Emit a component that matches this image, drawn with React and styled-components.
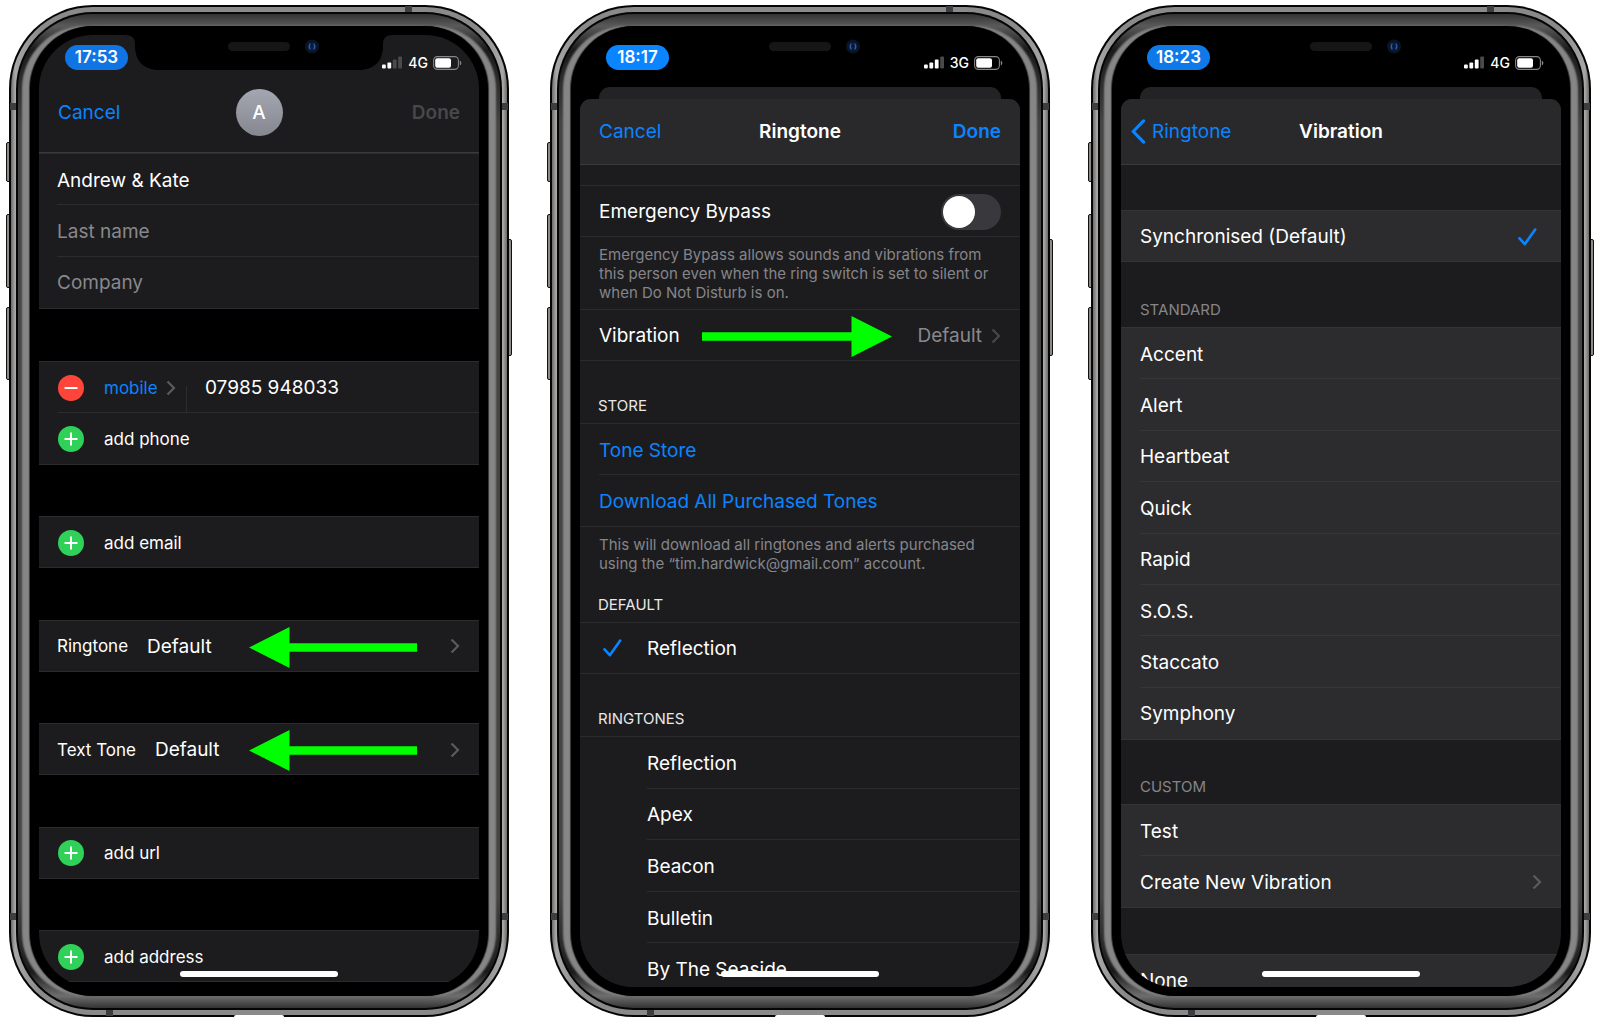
import React, { useState } from 'react';
import styled, { createGlobalStyle } from 'styled-components';

const GlobalStyle = createGlobalStyle`
  * {
    box-sizing: border-box;
  }

  body {
    margin: 0;
    background: #fff;
    font-family: Inter, 'Liberation Sans', sans-serif;
    font-size: 19px;
    color: #fff;
  }

  button,
  input {
    padding: 0;
    border: none;
    background: none;
    font: inherit;
    color: inherit;
    text-align: left;
  }
`;

const Page = styled.main`
  display: grid;
  grid-template-columns: repeat(3, minmax(0, 1fr));
  gap: 41px;
  padding: 5px 9px;
`;

/* ---------- device ---------- */

const Phone = styled.section`
  position: relative;
  height: calc(100vh - 10px);
  min-height: 900px;
  padding: 2px;
  border-radius: 84px;
  background: #050505;
`;

const Band = styled.div`
  height: 100%;
  padding: 5px;
  border-radius: 82px;
  background: linear-gradient(
    to right,
    #6c6a69,
    #a9a7a6 4px,
    #8a8a8a 30px,
    #8a8a8a calc(100% - 30px),
    #a9a7a6 calc(100% - 4px),
    #6c6a69
  );
`;

const Rim = styled.div`
  height: 100%;
  padding: 2px;
  border-radius: 77px;
  background: #050505;
`;

const Bezel = styled.div`
  height: 100%;
  padding: 12px;
  overflow: hidden;
  border-radius: 75px;
  background: linear-gradient(
    #333,
    #5a5a5a 12px,
    #1a1a1a 36px,
    #444 110px,
    #444 calc(100% - 110px),
    #1a1a1a calc(100% - 36px),
    #6e6e6e calc(100% - 12px),
    #333
  );
`;

const Glass = styled.div`
  height: 100%;
  padding: 9px;
  border-radius: 63px;
  background: #000;
  box-shadow:
    -1px 0 1px #333,
    1px 0 1px #333,
    -8px 0 2px #868686,
    8px 0 2px #868686;
`;

const Screen = styled.div`
  position: relative;
  display: flex;
  flex-direction: column;
  height: 100%;
  overflow: hidden;
  border-radius: 54px;
  background: #000;
`;

const SideKey = styled.i`
  position: absolute;
  z-index: -1;
  ${({ $side }) => $side}: -3px;
  top: ${({ $top }) => $top}px;
  width: 6px;
  height: ${({ $length }) => $length}px;
  border: 1px solid #111;
  border-radius: 2px;
  background: #8d8b8a;
`;

const AntennaLine = styled.i`
  position: absolute;
  width: ${({ $flat }) => ($flat ? 7 : 6)}px;
  height: ${({ $flat }) => ($flat ? 6 : 7)}px;
  background: #3d3d42;
`;

const PortGlint = styled.i`
  position: absolute;
  bottom: 0;
  left: 50%;
  width: 50px;
  height: 2px;
  margin-left: -25px;
  border-radius: 2px 2px 0 0;
  background: #fff;
`;

const Notch = styled.svg`
  position: absolute;
  top: 0;
  left: 50%;
  width: 268px;
  height: 36px;
  margin-left: -134px;
`;

const HomeBar = styled.i`
  position: absolute;
  bottom: 10px;
  left: 50%;
  width: 158px;
  height: 6px;
  margin-left: -79px;
  border-radius: 3px;
  background: #fff;
`;

/* ---------- status bar ---------- */

const StatusBar = styled.header`
  display: flex;
  flex: none;
  align-items: flex-end;
  justify-content: space-between;
  height: 35px;
  padding: 0 17px 0 26px;
  background: ${({ $bg }) => $bg || 'transparent'};
`;

const Clock = styled.time`
  width: 63px;
  border-radius: 13px;
  background: ${({ $color }) => $color};
  font-size: 17px;
  font-weight: 600;
  line-height: 25px;
  text-align: center;
`;

const Signals = styled.div`
  display: flex;
  align-items: center;
  gap: 5px;
  font-size: 14px;
  font-weight: 500;
  line-height: 15px;
`;

/* ---------- navigation bars ---------- */

const NavBar = styled.nav`
  display: grid;
  flex: none;
  grid-template-columns: 1fr auto 1fr;
  align-items: center;
  height: ${({ $tall }) => ($tall ? 83 : 66)}px;
  padding: ${({ $tall }) => ($tall ? 3 : 0)}px 19px 0;
  border-bottom: 1px solid #3a3a3c;
  background: ${({ $tall }) => ($tall ? '#1c1c1e' : '#29292b')};
`;

const NavButton = styled.button`
  display: flex;
  align-items: center;
  gap: 6px;
  justify-self: ${({ $end }) => ($end ? 'end' : 'start')};
  margin-left: ${({ $back }) => ($back ? -9 : 0)}px;
  color: #0a84ff;
  font-weight: ${({ $end }) => ($end ? 600 : 400)};

  &:disabled {
    color: #48484b;
  }
`;

const NavTitle = styled.h1`
  margin: 0;
  font-size: 19px;
  font-weight: 600;
`;

const Avatar = styled.span`
  width: 47px;
  border-radius: 50%;
  background: linear-gradient(#a4a6b1, #858790);
  font-weight: 500;
  line-height: 47px;
  text-align: center;
`;

const BackCard = styled.div`
  flex: none;
  height: 12px;
  margin: 17px 19px 0;
  border-radius: 11px 11px 0 0;
  background: #232325;
`;

const Sheet = styled.div`
  display: flex;
  flex: 1;
  flex-direction: column;
  min-height: 0;
  overflow: hidden;
  border-radius: 11px 11px 0 0;
  background: #1c1c1e;
`;

/* ---------- lists ---------- */

const CardBody = styled.div`
  display: flex;
  flex: 1;
  flex-direction: column;
  justify-content: space-between;
  margin-bottom: 5px;
`;

const Group = styled.div`
  display: flex;
  flex: none;
  flex-direction: column;
  min-height: ${({ $height }) => $height}px;
  border: solid ${({ $line }) => $line || '#2c2c2e'};
  border-width: 1px 0;
  background: ${({ $bg }) => $bg || '#1c1c1e'};
`;

const Row = styled.div`
  position: relative;
  display: flex;
  flex: 1;
  align-items: stretch;
  padding-left: ${({ $inset }) => $inset || 19}px;
`;

const RowBody = styled.div`
  display: flex;
  flex: 1;
  align-items: center;
  min-width: 0;
  padding: 2px 19px 0 0;
  border-bottom: 1px solid ${({ $line }) => $line || '#2c2c2e'};

  ${Row}:last-child > & {
    border-bottom-color: transparent;
  }
`;

const RowButton = styled.button`
  flex: 1;
  align-self: stretch;
  color: ${({ $accent }) => ($accent ? '#0a84ff' : '#fff')};
`;

const RowLabel = styled.label`
  flex: 1;
`;

const BadgeButton = styled.button`
  display: flex;
  flex: none;
  width: 46px;
`;

const TickColumn = styled.span`
  display: flex;
  flex: none;
  align-items: center;
  width: 48px;
  padding-left: 4px;
`;

const TickEnd = styled.span`
  display: flex;
  padding-right: 5px;
`;

const Field = styled.input`
  flex: 1;
  min-width: 0;
  outline: none;

  &::placeholder {
    color: #88888d;
    opacity: 1;
  }
`;

const EntryButton = styled.button`
  display: flex;
  flex: 1;
  align-items: center;
  align-self: stretch;
  gap: 19px;
  font-size: 17px;
`;

const EntryLead = styled.span`
  display: flex;
  flex: none;
  width: 27px;
`;

const PhoneKind = styled.button`
  display: flex;
  align-items: center;
  gap: 8px;
  width: 82px;
  color: #0a84ff;
  font-size: 17px;
`;

const KindDivider = styled.i`
  align-self: flex-end;
  width: 1px;
  height: 26px;
  margin-right: 18px;
  background: #2c2c2e;
`;

const Value = styled.span`
  flex: 1;
  font-size: 19px;
`;

const Muted = styled.span`
  margin-right: 9px;
  color: #88888d;
`;

const GroupTitle = styled.h2`
  display: flex;
  flex: none;
  align-items: flex-end;
  height: ${({ $height }) => $height}px;
  margin: 0;
  padding: 0 ${({ $muted }) => ($muted ? 19 : 18)}px 8px;
  color: ${({ $muted }) => ($muted ? '#85858a' : '#e8e8ea')};
  font-size: 15px;
  font-weight: 400;
  line-height: 18px;
`;

const Note = styled.p`
  flex: none;
  margin: 0;
  padding: 8px 19px 7px;
  color: #85858a;
  font-size: 15px;
  line-height: 19px;
  white-space: nowrap;
`;

const Spacer = styled.div`
  flex: none;
  height: ${({ $height }) => $height}px;
`;

const Switch = styled.input`
  width: 60px;
  height: 36px;
  margin: 0;
  border-radius: 18px;
  background: ${({ checked }) => (checked ? '#30d158' : '#39393d')};
  appearance: none;

  &::before {
    display: block;
    width: 32px;
    height: 32px;
    margin: 2px;
    border-radius: 50%;
    background: #fff;
    content: '';
    transform: translateX(${({ checked }) => (checked ? 24 : 0)}px);
  }
`;

const ArrowSvg = styled.svg`
  position: absolute;
  top: 6px;
  right: ${({ $right }) => $right}px;
`;

/* ---------- icons ---------- */

const SignalIcon = ({ bars }) => (
  <svg width="21" height="13" viewBox="0 0 21 13" aria-hidden="true">
    {[4, 6, 9, 12].map((h, i) => (
      <rect key={h} x={i * 5.4} y={12.5 - h} width="3.8" height={h} rx="1" fill={i < bars ? '#fff' : '#4a4a4c'} />
    ))}
  </svg>
);

const BatteryIcon = () => (
  <svg width="29" height="14" viewBox="0 0 29 14" aria-hidden="true">
    <rect x="0.6" y="0.6" width="24.8" height="12.8" rx="3.8" fill="none" stroke="#87878a" strokeWidth="1.1" />
    <rect x="2.2" y="2.2" width="15.8" height="9.6" rx="2" fill="#fff" />
    <path d="M26.8 4.8c1 .3 1.5 1.1 1.5 2.2s-.5 1.9-1.5 2.2z" fill="#87878a" />
  </svg>
);

const Chevron = ({ color = '#5b5b5f' }) => (
  <svg width="10" height="16" viewBox="0 0 10 16" fill="none" aria-hidden="true">
    <path d="M1.5 1.5 8 8l-6.5 6.5" stroke={color} strokeWidth="2.2" />
  </svg>
);

const BackIcon = () => (
  <svg width="15" height="25" viewBox="0 0 15 25" fill="none" aria-hidden="true">
    <path d="M12.6 1.9 2.2 12.5l10.4 10.6" stroke="#0a84ff" strokeWidth="3.2" strokeLinecap="round" strokeLinejoin="round" />
  </svg>
);

const CheckIcon = () => (
  <svg width="19" height="18" viewBox="0 0 19 18" fill="none" aria-hidden="true">
    <path d="M1.5 10.3 6.8 16.2 17.2 1.5" stroke="#0a84ff" strokeWidth="2.6" strokeLinecap="round" strokeLinejoin="round" />
  </svg>
);

const BadgeIcon = ({ remove }) => (
  <svg width="26" height="26" viewBox="0 0 26 26" aria-hidden="true">
    <circle cx="13" cy="13" r="13" fill={remove ? '#ff453a' : '#30d158'} />
    <path d={remove ? 'M6.5 13h13' : 'M6.5 13h13M13 6.5v13'} stroke="#fff" strokeWidth="2" />
  </svg>
);

const ArrowLeft = () => (
  <ArrowSvg $right={62} width="168" height="41" viewBox="0 0 168 41" aria-hidden="true">
    <path d="M0 20.5 40.5 0v16.2H168v8.6H40.5V41z" fill="#0f0" />
  </ArrowSvg>
);

const ArrowRight = () => (
  <ArrowSvg $right={128} width="190" height="41" viewBox="0 0 190 41" aria-hidden="true">
    <path d="M190 20.5 149.5 0v16.2H0v8.6h149.5V41z" fill="#0f0" />
  </ArrowSvg>
);

/* ---------- shared pieces ---------- */

const Device = ({ label, time, timeColor, bars, network, barBg, children }) => (
  <Phone aria-label={label}>
    <SideKey $side="left" $top={137} $length={40} />
    <SideKey $side="left" $top={209} $length={74} />
    <SideKey $side="left" $top={302} $length={73} />
    <SideKey $side="right" $top={234} $length={117} />
    <Band>
      <Rim>
        <Bezel>
          <Glass>
            <Screen>
              <StatusBar $bg={barBg}>
                <Clock $color={timeColor}>{time}</Clock>
                <Signals>
                  <SignalIcon bars={bars} />
                  {network}
                  <BatteryIcon />
                </Signals>
              </StatusBar>
              {children}
              <Notch viewBox="0 0 268 36" aria-hidden="true">
                <path d="M0 0h268c-7 0-10 3-10 9v2c0 15-9 24-24 24H34C19 35 10 26 10 11V9c0-6-3-9-10-9z" fill="#000" />
                <rect x="103" y="7" width="62" height="9" rx="4.5" fill="#161616" />
                <circle cx="187" cy="11.5" r="7" fill="#0b1424" />
                <circle cx="187" cy="11.5" r="4.5" fill="#0a1a3c" />
                <path d="M185.2 8.5q-2 3 0 6M188.8 8.5q2 3 0 6" fill="none" stroke="#2f5da6" strokeWidth="1.2" />
              </Notch>
              <HomeBar />
            </Screen>
          </Glass>
        </Bezel>
      </Rim>
    </Band>
    <AntennaLine style={{ top: 98, left: 1 }} />
    <AntennaLine style={{ top: 98, right: 1 }} />
    <AntennaLine style={{ bottom: 97, left: 1 }} />
    <AntennaLine style={{ bottom: 97, right: 1 }} />
    <AntennaLine $flat style={{ top: 1, right: 97 }} />
    <AntennaLine $flat style={{ bottom: 1, left: 97 }} />
    <PortGlint />
  </Phone>
);

const AddRow = ({ children }) => (
  <Row>
    <RowBody>
      <EntryButton>
        <EntryLead>
          <BadgeIcon />
        </EntryLead>
        {children}
      </EntryButton>
    </RowBody>
  </Row>
);

const FieldRow = ({ label, value }) => (
  <Row $inset={18}>
    <RowBody>
      <Field aria-label={label} placeholder={label} defaultValue={value} />
    </RowBody>
  </Row>
);

const ToneEntry = ({ label, value }) => (
  <Row $inset={18}>
    <RowBody>
      <EntryButton>
        {label}
        <Value>{value}</Value>
        <Chevron />
      </EntryButton>
    </RowBody>
    <ArrowLeft />
  </Row>
);

/* ---------- screens ---------- */

const ContactScreen = () => (
  <Device label="Edit contact" time="17:53" timeColor="#1174e4" bars={2} network="4G" barBg="#1c1c1e">
    <NavBar $tall>
      <NavButton>Cancel</NavButton>
      <Avatar>A</Avatar>
      <NavButton $end disabled>Done</NavButton>
    </NavBar>
    <CardBody>
      <Group $height={156}>
        <FieldRow label="First name" value="Andrew &amp; Kate" />
        <FieldRow label="Last name" />
        <FieldRow label="Company" />
      </Group>
      <Group $height={104}>
        <Row>
          <RowBody>
            <BadgeButton aria-label="Remove number">
              <BadgeIcon remove />
            </BadgeButton>
            <PhoneKind>
              mobile
              <Chevron />
            </PhoneKind>
            <KindDivider />
            <Field type="tel" aria-label="Mobile number" defaultValue="07985 948033" />
          </RowBody>
        </Row>
        <AddRow>add phone</AddRow>
      </Group>
      <Group $height={52}>
        <AddRow>add email</AddRow>
      </Group>
      <Group $height={52}>
        <ToneEntry label="Ringtone" value="Default" />
      </Group>
      <Group $height={52}>
        <ToneEntry label="Text Tone" value="Default" />
      </Group>
      <Group $height={52}>
        <AddRow>add url</AddRow>
      </Group>
      <Group $height={52}>
        <AddRow>add address</AddRow>
      </Group>
    </CardBody>
  </Device>
);

const tones = ['Reflection', 'Apex', 'Beacon', 'Bulletin', 'By The Seaside'];

const RingtoneScreen = () => {
  const [bypass, setBypass] = useState(false);

  return (
    <Device label="Ringtone" time="18:17" timeColor="#0a84ff" bars={3} network="3G">
      <BackCard />
      <Sheet>
        <NavBar>
          <NavButton>Cancel</NavButton>
          <NavTitle>Ringtone</NavTitle>
          <NavButton $end>Done</NavButton>
        </NavBar>
        <Spacer $height={20} />
        <Group $height={52}>
          <Row>
            <RowBody>
              <RowLabel htmlFor="bypass">Emergency Bypass</RowLabel>
              <Switch
                id="bypass"
                type="checkbox"
                checked={bypass}
                onChange={(e) => setBypass(e.target.checked)}
              />
            </RowBody>
          </Row>
        </Group>
        <Note>
          Emergency Bypass allows sounds and vibrations from
          <br />
          this person even when the ring switch is set to silent or
          <br />
          when Do Not Disturb is on.
        </Note>
        <Group $height={52}>
          <Row>
            <RowBody>
              <RowButton>Vibration</RowButton>
              <Muted>Default</Muted>
              <Chevron color="#48484c" />
            </RowBody>
            <ArrowRight />
          </Row>
        </Group>
        <GroupTitle $height={62}>STORE</GroupTitle>
        <Group $height={104}>
          <Row>
            <RowBody>
              <RowButton $accent>Tone Store</RowButton>
            </RowBody>
          </Row>
          <Row>
            <RowBody>
              <RowButton $accent>Download All Purchased Tones</RowButton>
            </RowBody>
          </Row>
        </Group>
        <Note>
          This will download all ringtones and alerts purchased
          <br />
          using the “tim.hardwick@gmail.com” account.
        </Note>
        <GroupTitle $height={42}>DEFAULT</GroupTitle>
        <Group $height={52}>
          <Row>
            <TickColumn>
              <CheckIcon />
            </TickColumn>
            <RowBody>
              <RowButton>Reflection</RowButton>
            </RowBody>
          </Row>
        </Group>
        <GroupTitle $height={62}>RINGTONES</GroupTitle>
        <Group $height={260}>
          {tones.map((tone) => (
            <Row key={tone} $inset={67}>
              <RowBody>
                <RowButton>{tone}</RowButton>
              </RowBody>
            </Row>
          ))}
        </Group>
      </Sheet>
    </Device>
  );
};

const patterns = ['Accent', 'Alert', 'Heartbeat', 'Quick', 'Rapid', 'S.O.S.', 'Staccato', 'Symphony'];

const VibrationScreen = () => (
  <Device label="Vibration" time="18:23" timeColor="#0f79ea" bars={3} network="4G">
    <BackCard />
    <Sheet>
      <NavBar>
        <NavButton $back>
          <BackIcon />
          Ringtone
        </NavButton>
        <NavTitle>Vibration</NavTitle>
      </NavBar>
      <Spacer $height={45} />
      <Group $height={52} $bg="#2c2c2e" $line="#343436">
        <Row>
          <RowBody>
            <RowButton>Synchronised (Default)</RowButton>
            <TickEnd>
              <CheckIcon />
            </TickEnd>
          </RowBody>
        </Row>
      </Group>
      <GroupTitle $height={65} $muted>STANDARD</GroupTitle>
      <Group $height={413} $bg="#2c2c2e" $line="#343436">
        {patterns.map((pattern) => (
          <Row key={pattern}>
            <RowBody $line="#363638">
              <RowButton>{pattern}</RowButton>
            </RowBody>
          </Row>
        ))}
      </Group>
      <GroupTitle $height={64} $muted>CUSTOM</GroupTitle>
      <Group $height={104} $bg="#2c2c2e" $line="#343436">
        <Row>
          <RowBody $line="#363638">
            <RowButton>Test</RowButton>
          </RowBody>
        </Row>
        <Row>
          <RowBody>
            <RowButton>Create New Vibration</RowButton>
            <Chevron />
          </RowBody>
        </Row>
      </Group>
      <Spacer $height={46} />
      <Group $height={52} $bg="#2c2c2e" $line="#343436">
        <Row>
          <RowBody>
            <RowButton>None</RowButton>
          </RowBody>
        </Row>
      </Group>
    </Sheet>
  </Device>
);

const App = () => (
  <>
    <GlobalStyle />
    <Page>
      <ContactScreen />
      <RingtoneScreen />
      <VibrationScreen />
    </Page>
  </>
);

export default App;
